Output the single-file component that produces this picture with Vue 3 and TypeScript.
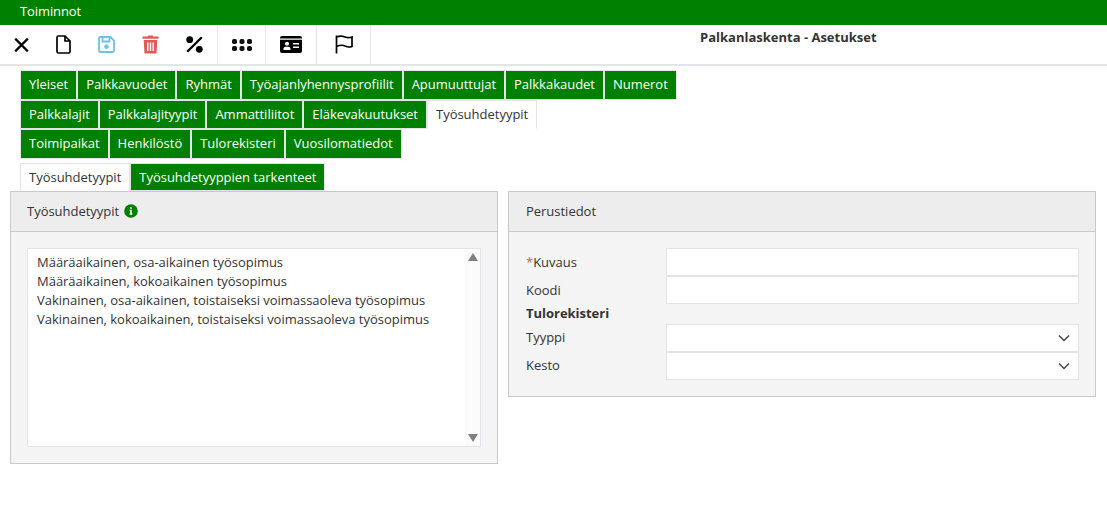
<script setup lang="ts">
const tabRows: { label: string; active?: boolean }[][] = [
  [{ label: 'Yleiset' }, { label: 'Palkkavuodet' }, { label: 'Ryhmät' }, { label: 'Työajanlyhennysprofiilit' }, { label: 'Apumuuttujat' }, { label: 'Palkkakaudet' }, { label: 'Numerot' }],
  [{ label: 'Palkkalajit' }, { label: 'Palkkalajityypit' }, { label: 'Ammattiliitot' }, { label: 'Eläkevakuutukset' }, { label: 'Työsuhdetyypit', active: true }],
  [{ label: 'Toimipaikat' }, { label: 'Henkilöstö' }, { label: 'Tulorekisteri' }, { label: 'Vuosilomatiedot' }]
]
const items: string[] = [
  'Määräaikainen, osa-aikainen työsopimus',
  'Määräaikainen, kokoaikainen työsopimus',
  'Vakinainen, osa-aikainen, toistaiseksi voimassaoleva työsopimus',
  'Vakinainen, kokoaikainen, toistaiseksi voimassaoleva työsopimus'
]
</script>

<template>
  <div class="page">
    <div class="topbar">Toiminnot</div>
    <div class="toolbar">
      <div class="tools">
        <div class="group first">
          <svg width="15" height="14" viewBox="0 0 15 14"><path d="M1.200.7 13.800 13.300M13.800.7 1.200 13.300" stroke="#000" stroke-width="2.300" fill="none"/></svg>
          <svg width="15" height="19" viewBox="0 0 15 19"><path d="M1 2.500A1.500 1.500 0 0 1 2.500 1H9L14 6V16.500A1.500 1.500 0 0 1 12.500 18H2.500A1.500 1.500 0 0 1 1 16.500ZM9 1V6H14" stroke="#000" stroke-width="1.700" fill="none"/></svg>
          <svg width="17" height="17" viewBox="0 0 17 17"><path d="M3 1H12.500L16 4.500V14.500A1.500 1.500 0 0 1 14.500 16H2.500A1.500 1.500 0 0 1 1 14.500V2.500A1.500 1.500 0 0 1 3 1ZM4.500 1.500V5.500H11.500V1.500" stroke="#6dc0e8" stroke-width="1.800" fill="none"/><circle cx="8.500" cy="10.800" r="2.300" fill="#6dc0e8"/></svg>
          <svg width="17" height="19" viewBox="0 0 17 19"><path d="M5.500 1.500 6.500.5H10.500L11.500 1.500H16.500V3.700H.5V1.500ZM1.700 5H15.300L14.500 18.500H2.500ZM5 7.500V16H6.500V7.500ZM7.800 7.500V16H9.200V7.500ZM10.500 7.500V16H12V7.500Z" fill="#df5b57" fill-rule="evenodd"/></svg>
          <svg width="17" height="17" viewBox="0 0 17 17"><circle cx="3.700" cy="3.700" r="3.400" fill="#000"/><circle cx="13.300" cy="13.300" r="3.400" fill="#000"/><path d="M15.800 1.200 1.200 15.800" stroke="#000" stroke-width="2.300"/></svg>
        </div>
        <div class="group apps">
          <svg width="20" height="12" viewBox="0 0 20 12"><g fill="#111"><rect x="0" y="0" width="5" height="5" rx="1.800"/><rect x="7.500" y="0" width="5" height="5" rx="1.800"/><rect x="15" y="0" width="5" height="5" rx="1.800"/><rect x="0" y="7" width="5" height="5" rx="1.800"/><rect x="7.500" y="7" width="5" height="5" rx="1.800"/><rect x="15" y="7" width="5" height="5" rx="1.800"/></g></svg>
        </div>
        <div class="group card">
          <svg width="22" height="17" viewBox="0 0 22 17"><path fill-rule="evenodd" d="M2 0H20A2 2 0 0 1 22 2V15A2 2 0 0 1 20 17H2A2 2 0 0 1 0 15V2A2 2 0 0 1 2 0ZM0 2.500V3.700H22V2.500ZM7 5.800A2 2 0 1 0 7 9.800 2 2 0 0 0 7 5.800ZM3.500 14H10.500V12.300A2 2 0 0 0 8.500 10.800H5.500A2 2 0 0 0 3.500 12.300ZM13 7V8.500H19V7ZM13 10.500V12H19V10.500Z" fill="#000"/></svg>
        </div>
        <div class="group flag">
          <svg width="18" height="19" viewBox="0 0 18 19"><path d="M1.500 .5V18.500M1.500 2C5 .8 8 1.200 10 2S14.500 3 17 2V11.500C14 12.500 12 12 10 11S5 10 1.500 11.500" stroke="#000" stroke-width="1.700" fill="none"/></svg>
        </div>
      </div>
      <h1 class="title">Palkanlaskenta - Asetukset</h1>
    </div>

    <div class="tabrows">
      <div v-for="(row, i) in tabRows" :key="i" class="tabrow">
        <span v-for="t in row" :key="t.label" class="tab" :class="{ active: t.active }">{{ t.label }}</span>
      </div>
    </div>

    <div class="subtabs">
      <span class="tab active">Työsuhdetyypit</span>
      <span class="tab">Työsuhdetyyppien tarkenteet</span>
    </div>

    <div class="panels">
      <section class="panel left">
        <header class="panel-head">Työsuhdetyypit
          <svg class="info" width="14" height="14" viewBox="0 0 14 14"><circle cx="7" cy="7" r="6.800" fill="#008000"/><path d="M6.200 3.300H7.800V4.800H6.200ZM5.700 5.800H7.800V9.600H8.400V10.700H5.600V9.600H6.200V6.900H5.700Z" fill="#fff"/></svg>
        </header>
        <div class="panel-body">
          <div class="listbox">
            <div class="list">
              <div v-for="it in items" :key="it" class="item">{{ it }}</div>
            </div>
            <div class="scroll">
              <svg width="10" height="8" viewBox="0 0 10 8"><path d="M5 0 10 8H0Z" fill="#808080"/></svg>
              <svg width="10" height="8" viewBox="0 0 10 8"><path d="M0 0H10L5 8Z" fill="#808080"/></svg>
            </div>
          </div>
        </div>
      </section>

      <section class="panel right">
        <header class="panel-head">Perustiedot</header>
        <div class="panel-body form">
          <div class="field"><label><span class="req">*</span>Kuvaus</label><div class="input"></div></div>
          <div class="field"><label>Koodi</label><div class="input"></div></div>
          <div class="section-label">Tulorekisteri</div>
          <div class="field pick"><label>Tyyppi</label><div class="input select"><svg width="12" height="8" viewBox="0 0 12 8"><path d="M1 1.500 6 6.500 11 1.500" stroke="#444" stroke-width="1.500" fill="none"/></svg></div></div>
          <div class="field pick"><label>Kesto</label><div class="input select"><svg width="12" height="8" viewBox="0 0 12 8"><path d="M1 1.500 6 6.500 11 1.500" stroke="#444" stroke-width="1.500" fill="none"/></svg></div></div>
        </div>
      </section>
    </div>
  </div>
</template>

<style>
html, body { margin: 0; background: #fff; }
</style>

<style scoped>
.page {
  width: 1107px;
  height: 528px;
  overflow: hidden;
  font-family: "Open Sans", sans-serif;
  font-size: 13px;
  letter-spacing: -0.02px;
  color: #333;
  background: #fff;
}
.topbar {
  height: 25px;
  line-height: 23px;
  background: #008000;
  color: #fff;
  padding-left: 20px;
  letter-spacing: -0.1px;
}
.toolbar {
  height: 39px;
  border-bottom: 2px solid #e4e5ea;
  display: flex;
  position: relative;
}
.tools { display: flex; height: 39px; }
.group {
  display: flex;
  align-items: center;
  justify-content: center;
  border-right: 1px solid #e4e5ea;
}
.first { width: 218px; box-sizing: border-box; justify-content: flex-start; padding-left: 14px; gap: 27px; }
.apps { width: 47px; }
.card { width: 50px; }
.flag { width: 53px; }
.title {
  position: absolute;
  left: 700px;
  top: 3px;
  margin: 0;
  font-size: 13px;
  line-height: 18px;
  font-weight: 700;
  letter-spacing: 0;
  color: #333;
  white-space: nowrap;
}
.tabrows {
  padding: 4px 0 0 20px;
  display: flex;
  flex-direction: column;
}
.tabrow { display: flex; height: 29.5px; }
.tab {
  box-sizing: border-box;
  line-height: 27px;
  padding: 0 8px;
  background: #008000;
  color: #fff;
  border: 1px solid #e4e5ea;
  white-space: nowrap;
  letter-spacing: -0.012px;
}
.tab.active { background: #fff; color: #333; border-bottom-color: #fff; }
.subtabs { display: flex; padding: 4.5px 0 0 20px; height: 28px; }
.panels { display: flex; align-items: flex-start; gap: 10px; padding-left: 10px; }
.panel {
  box-sizing: border-box;
  border: 1px solid #c9c9c9;
  background: #f4f4f4;
}
.left { width: 488px; height: 273px; }
.right { width: 588px; height: 206px; }
.panel-head {
  box-sizing: border-box;
  height: 40px;
  padding: 0 0 2px 17px;
  display: flex;
  align-items: center;
  gap: 5px;
  background: #ededed;
  border-bottom: 1px solid #c9c9c9;
}
.left .panel-head { padding-left: 16px; }
.panel-body { padding: 16px 16px 0; }
.listbox {
  box-sizing: border-box;
  height: 199px;
  background: #fff;
  border: 1px solid #e1e3ea;
  display: flex;
  justify-content: space-between;
}
.list { padding: 4px 9px; line-height: 19px; }
.scroll {
  width: 15px;
  background: #fbfbfb;
  display: flex;
  flex-direction: column;
  justify-content: space-between;
  align-items: center;
  padding: 4px 0;
}
.form { padding: 16px 16px 0 17px; }
.field { display: flex; align-items: flex-start; height: 28px; }
.field label { width: 140px; flex: none; line-height: 28px; }
.pick label { margin-top: -1px; }
.req { color: #c8604c; }
.input {
  box-sizing: border-box;
  flex: 1;
  height: 27.500px;
  background: #fff;
  border: 1px solid #e1e3ea;
  display: flex;
  align-items: center;
  justify-content: flex-end;
  padding-right: 8px;
}
.section-label { font-weight: 700; line-height: 19px; height: 20px; }
</style>
